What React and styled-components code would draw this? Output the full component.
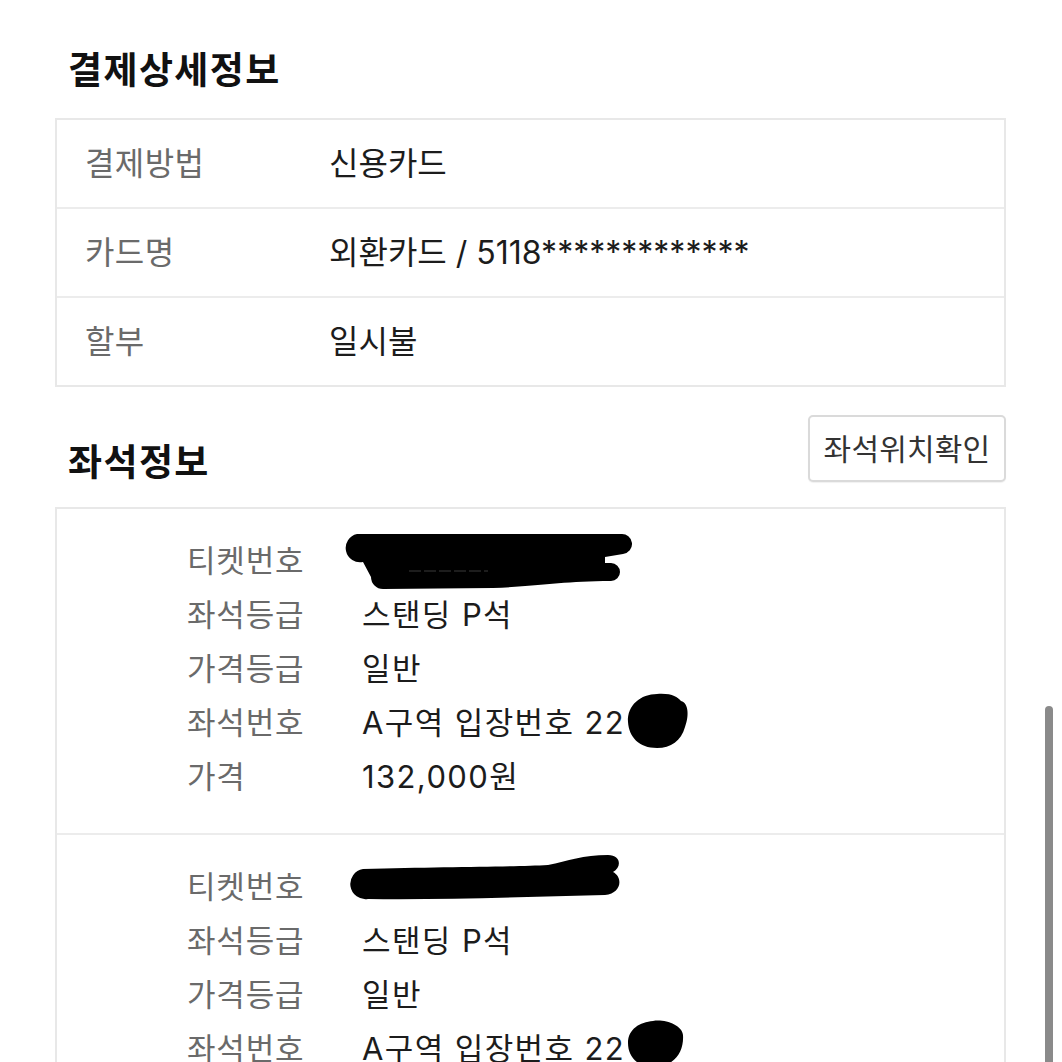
import styled, { createGlobalStyle } from "styled-components";

const GlobalStyle = createGlobalStyle`
  html, body {
    margin: 0;
    padding: 0;
    background: #ffffff;
    overflow: hidden;
  }
  body {
    font-family: "Noto Sans CJK KR", "Noto Sans", sans-serif;
    color: #1a1a1a;
  }
`;

const valueFont = `"Inter", "Noto Sans CJK KR", sans-serif`;

const Page = styled.div`
  width: 1062px;
  height: 1062px;
  box-sizing: border-box;
  padding: 47px 56px 0 55px;
  display: flex;
  flex-direction: column;
  overflow: hidden;
`;

const SectionTitle = styled.h2`
  margin: 0 0 0 13px;
  font-size: 37px;
  line-height: 42px;
  font-weight: 700;
  color: #111111;
  letter-spacing: 1.4px;
`;

const PayTable = styled.div`
  margin-top: 29px;
  border: 2px solid #e8e8e8;
  display: flex;
  flex-direction: column;
`;

const PayRow = styled.div`
  height: ${(p) => (p.first ? 87 : 89)}px;
  box-sizing: border-box;
  padding: 0 0 6px 28px;
  display: grid;
  grid-template-columns: 244px 1fr;
  align-items: center;
  border-top: ${(p) => (p.first ? "none" : "2px solid #ececec")};
`;

const PayLabel = styled.span`
  font-size: 32px;
  letter-spacing: 0.4px;
  color: #6a6a6a;
`;

const PayValue = styled.span`
  font-family: ${valueFont};
  font-size: 32px;
  letter-spacing: 0;
  color: #1c1c1c;
`;

const SeatHeader = styled.div`
  margin-top: 28px;
  display: flex;
  justify-content: space-between;
  align-items: flex-end;
`;

const LocateButton = styled.button`
  height: 67px;
  width: 198px;
  margin: 0;
  padding: 0 0 3px;
  border: 2px solid #dadada;
  border-radius: 5px;
  background: #ffffff;
  box-shadow: 0 1px 1px rgba(0, 0, 0, 0.06);
  font-family: "Noto Sans CJK KR", sans-serif;
  font-size: 30px;
  letter-spacing: 0.2px;
  color: #333333;
`;

const SeatTable = styled.div`
  margin-top: 25px;
  border: 2px solid #e8e8e8;
  border-bottom: none;
  display: flex;
  flex-direction: column;
`;

const TicketBlock = styled.div`
  padding: 24px 0 30px 130px;
  border-top: ${(p) => (p.first ? "none" : "2px solid #ececec")};
  display: flex;
  flex-direction: column;
`;

const TicketRow = styled.div`
  height: 54px;
  display: grid;
  grid-template-columns: 175px 1fr;
  align-items: center;
`;

const TicketLabel = styled.span`
  font-size: 31px;
  letter-spacing: 0.8px;
  color: #6a6a6a;
  padding-bottom: 4px;
`;

const TicketValue = styled.span`
  display: flex;
  align-items: center;
  height: 54px;
  box-sizing: border-box;
  padding-bottom: 4px;
  font-family: ${valueFont};
  font-size: 31px;
  letter-spacing: 1.4px;
  color: #1c1c1c;
  white-space: pre;
`;

const Redact = styled.svg`
  flex: none;
  align-self: flex-start;
  overflow: visible;
  margin-left: ${(p) => p.$shift || 0}px;
`;

const ScrollThumb = styled.div`
  position: fixed;
  left: 1045px;
  top: 706px;
  width: 8px;
  height: 380px;
  border-radius: 4px;
  background: #8a8a8a;
`;

const TicketBlob = ({ variant }) =>
  variant === 1 ? (
    <Redact width="290" height="54" $shift={-19} viewBox="0 0 290 54">
      <path
        fill="#000"
        d="M 14 1 L 278 1 A 10 10 0 0 1 280 21 L 262 24 L 262 30 L 268 30 A 9 9 0 0 1 268 48 C 220 48 200 53 150 55 L 40 56 A 12 12 0 0 1 28 44 L 20 29 A 14 14 0 0 1 14 1 Z"
      />
      <path d="M 66 38 L 145 38" stroke="#3a3a3a" strokeWidth="1" strokeDasharray="12 3" />
    </Redact>
  ) : (
    <Redact width="290" height="54" $shift={-19} viewBox="0 0 290 54">
      <path
        fill="#000"
        d="M 20 10 C 100 8 170 8 205 6 C 225 2 240 -4 265 -4 C 278 -4 279 8 270 13 C 280 18 279 34 262 36 C 180 38 100 41 25 40 A 15 15 0 0 1 20 10 Z"
      />
    </Redact>
  );

const SeatBlob = ({ variant }) => (
  <Redact width="62" height="54" $shift={2} viewBox="0 0 62 54">
    {variant === 1 ? (
      <path
        fill="#000"
        d="M 30 -1 C 45 -2 50 2 54 6 C 62 8 62 22 58 32 C 54 46 44 53 30 53 C 12 53 2 42 1 27 C 0 10 14 -1 30 -1 Z"
      />
    ) : (
      <path
        fill="#000"
        d="M 26 0 C 38 -2 55 4 56 14 C 57 30 49 44 29 46 C 11 47 1 36 1 22 C 1 8 13 1 26 0 Z"
      />
    )}
  </Redact>
);

const payRows = [
  { label: "결제방법", value: "신용카드" },
  { label: "카드명", value: "외환카드 / 5118*************" },
  { label: "할부", value: "일시불" },
];

const tickets = [1, 2];

const App = () => (
  <>
    <GlobalStyle />
    <Page>
      <SectionTitle>결제상세정보</SectionTitle>
      <PayTable>
        {payRows.map((row, i) => (
          <PayRow key={row.label} first={i === 0}>
            <PayLabel>{row.label}</PayLabel>
            <PayValue>{row.value}</PayValue>
          </PayRow>
        ))}
      </PayTable>

      <SeatHeader>
        <SectionTitle style={{ marginBottom: 1 }}>좌석정보</SectionTitle>
        <LocateButton>좌석위치확인</LocateButton>
      </SeatHeader>

      <SeatTable>
        {tickets.map((t, i) => (
          <TicketBlock key={t} first={i === 0}>
            <TicketRow>
              <TicketLabel>티켓번호</TicketLabel>
              <TicketValue>
                <TicketBlob variant={t} />
              </TicketValue>
            </TicketRow>
            <TicketRow>
              <TicketLabel>좌석등급</TicketLabel>
              <TicketValue>스탠딩 P석</TicketValue>
            </TicketRow>
            <TicketRow>
              <TicketLabel>가격등급</TicketLabel>
              <TicketValue>일반</TicketValue>
            </TicketRow>
            <TicketRow>
              <TicketLabel>좌석번호</TicketLabel>
              <TicketValue>
                A구역 입장번호 22
                <SeatBlob variant={t} />
              </TicketValue>
            </TicketRow>
            <TicketRow>
              <TicketLabel>가격</TicketLabel>
              <TicketValue>132,000원</TicketValue>
            </TicketRow>
          </TicketBlock>
        ))}
      </SeatTable>
      <ScrollThumb />
    </Page>
  </>
);

export default App;
